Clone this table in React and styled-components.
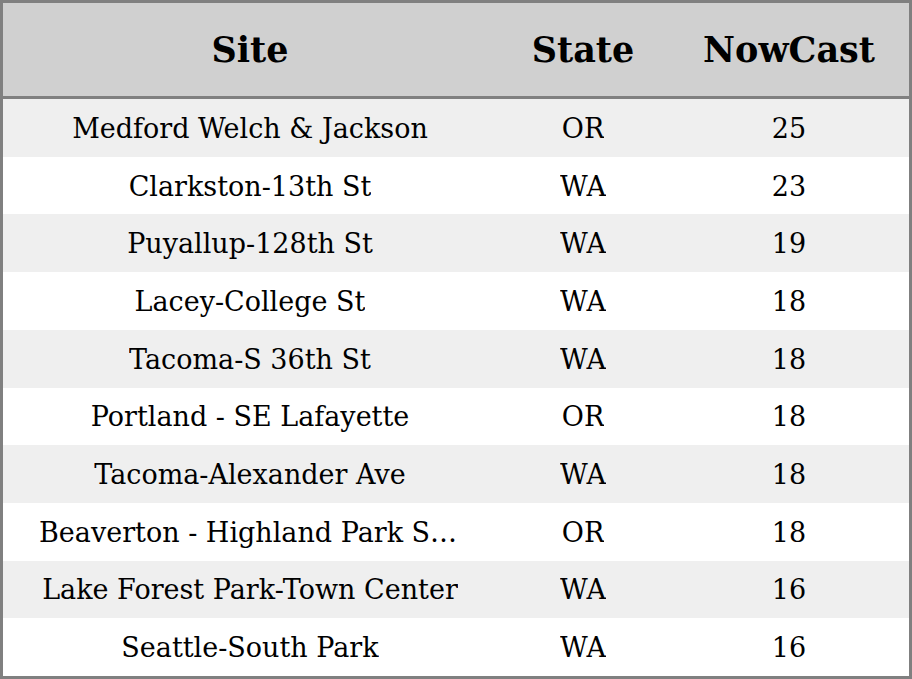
import { Fragment } from "react";
import styled, { createGlobalStyle } from "styled-components";

const GlobalStyle = createGlobalStyle`
  html, body {
    margin: 0;
    padding: 0;
    background: #ffffff;
  }
  body {
    font-family: "DejaVu Serif", serif;
    color: #000000;
  }
`;

const Table = styled.div`
  box-sizing: border-box;
  width: 912px;
  height: 679px;
  border: 3px solid #808080;
  display: grid;
  grid-template-columns: 494px 172px 1fr;
  grid-template-rows: 96px repeat(10, 1fr);
`;

const HeadCell = styled.div`
  display: flex;
  align-items: center;
  justify-content: center;
  background: #d0d0d0;
  border-bottom: 3px solid #808080;
  font-size: 35px;
  font-weight: bold;
`;

const Cell = styled.div`
  display: flex;
  align-items: center;
  justify-content: center;
  min-width: 0;
  padding: 1px 36px 0;
  background: ${(p) => (p.$striped ? "#efefef" : "#ffffff")};
  font-size: 27px;
`;

const Text = styled.span`
  white-space: nowrap;
  overflow: hidden;
  text-overflow: ellipsis;
`;

const rows = [
  ["Medford Welch & Jackson", "OR", 25],
  ["Clarkston-13th St", "WA", 23],
  ["Puyallup-128th St", "WA", 19],
  ["Lacey-College St", "WA", 18],
  ["Tacoma-S 36th St", "WA", 18],
  ["Portland - SE Lafayette", "OR", 18],
  ["Tacoma-Alexander Ave", "WA", 18],
  ["Beaverton - Highland Park School", "OR", 18],
  ["Lake Forest Park-Town Center", "WA", 16],
  ["Seattle-South Park", "WA", 16],
];

export default function App() {
  return (
    <>
      <GlobalStyle />
      <Table>
        <HeadCell>Site</HeadCell>
        <HeadCell>State</HeadCell>
        <HeadCell>NowCast</HeadCell>
        {rows.map(([site, state, value], i) => (
          <Fragment key={site}>
            <Cell $striped={i % 2 === 0}>
              <Text>{site}</Text>
            </Cell>
            <Cell $striped={i % 2 === 0}>
              <Text>{state}</Text>
            </Cell>
            <Cell $striped={i % 2 === 0}>
              <Text>{value}</Text>
            </Cell>
          </Fragment>
        ))}
      </Table>
    </>
  );
}
